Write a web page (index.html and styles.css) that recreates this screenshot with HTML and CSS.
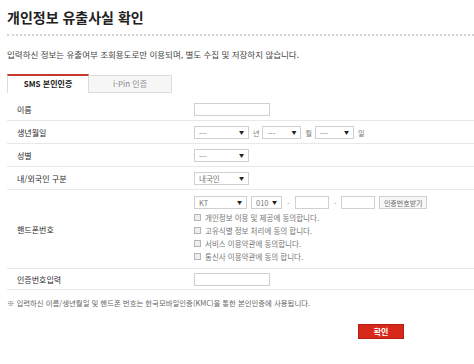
FILE: index.html
```html
<!DOCTYPE html>
<html lang="ko">
<head>
  <meta charset="UTF-8" />
  <meta name="viewport" content="width=device-width, initial-scale=1.0"/>
  <title>개인정보 유출사실 확인</title>
  <link rel="stylesheet" href="styles.css">
</head>
<body>

  <div class="page">
    <h1 class="title">개인정보 유출사실 확인</h1>
    <p class="intro">입력하신 정보는 유출여부 조회용도로만 이용되며, 별도 수집 및 저장하지 않습니다.</p>

    <div class="tabs">
      <div class="tab active">SMS 본인인증</div>
      <div class="tab">i-Pin 인증</div>
    </div>

    <div class="form">
      <div class="row first">
        <div class="label">이름</div>
        <div class="field"><input type="text" class="text name" /></div>
      </div>

      <div class="row">
        <div class="label">생년월일</div>
        <div class="field">
          <span class="select w-year"><select><option>---</option></select></span>
          <span class="unit">년</span>
          <span class="select w-small"><select><option>---</option></select></span>
          <span class="unit">월</span>
          <span class="select w-small"><select><option>---</option></select></span>
          <span class="unit">일</span>
        </div>
      </div>

      <div class="row">
        <div class="label">성별</div>
        <div class="field">
          <span class="select w-year"><select><option>---</option></select></span>
        </div>
      </div>

      <div class="row">
        <div class="label">내/외국인 구분</div>
        <div class="field">
          <span class="select w-year"><select><option>내국인</option></select></span>
        </div>
      </div>

      <div class="row phone">
        <div class="label">핸드폰번호</div>
        <div class="field-stack">
          <div class="field">
            <span class="select w-carrier"><select><option>KT</option></select></span>
            <span class="select w-prefix"><select><option>010</option></select></span>
            <span class="dash">-</span>
            <input type="text" class="text num" />
            <span class="dash">-</span>
            <input type="text" class="text num" />
            <button class="btn-code">인증번호받기</button>
          </div>
          <ul class="agree">
            <li><input type="checkbox" /> 개인정보 이용 및 제공에 동의합니다.</li>
            <li><input type="checkbox" /> 고유식별 정보 처리에 동의 합니다.</li>
            <li><input type="checkbox" /> 서비스 이용약관에 동의합니다.</li>
            <li><input type="checkbox" /> 통신사 이용약관에 동의 합니다.</li>
          </ul>
        </div>
      </div>

      <div class="row last">
        <div class="label">인증번호입력</div>
        <div class="field"><input type="text" class="text name" /></div>
      </div>
    </div>

    <p class="note">※ 입력하신 이름/생년월일 및 핸드폰 번호는 한국모바일인증(KMC)을 통한 본인인증에 사용됩니다.</p>

    <div class="actions">
      <button class="btn-confirm">확인</button>
    </div>
  </div>

</body>
</html>
```

FILE: styles.css
```css
* {
  box-sizing: border-box;
}

body {
  margin: 0;
  background: #fff;
  color: #333;
  font-family: "Noto Sans CJK KR", "Noto Sans", sans-serif;
  overflow: hidden;
}

.page {
  padding: 8px 0 0 7px;
}

.title {
  margin: 0;
  font-size: 14px;
  line-height: 18px;
  font-weight: bold;
  color: #222;
  padding-bottom: 8px;
  border-bottom: 2px dotted #d4d4d4;
}

.intro {
  margin: 12px 0 0;
  font-size: 8.5px;
  line-height: 12px;
  color: #444;
}

.tabs {
  display: flex;
  margin-top: 14px;
  height: 19px;
}

.tab {
  width: 83px;
  height: 18px;
  margin-top: 1px;
  background: #f6f6f6;
  border: 1px solid #dcdcdc;
  border-left: none;
  color: #888;
  font-size: 8px;
  line-height: 16px;
  text-align: center;
}

.tab.active {
  width: 82px;
  height: 19px;
  margin-top: 0;
  background: #fff;
  border: 1px solid #dcdcdc;
  border-top: 2px solid #c8372d;
  border-bottom: none;
  color: #222;
  font-weight: bold;
}

.row {
  display: grid;
  grid-template-columns: 187px 1fr;
  align-items: center;
  padding: 5px 0 4px;
  border-bottom: 1px solid #e8e8e8;
}

.row.first {
  padding-top: 10px;
}

.row.phone {
  padding: 6px 0 5px;
}

.row.last {
  padding: 4px 0 3px;
}

.label {
  padding-left: 10px;
  font-size: 8px;
  color: #2a2a2a;
}

.field {
  display: flex;
  align-items: center;
  height: 13px;
  font-size: 7.5px;
  color: #666;
}

.text {
  height: 13px;
  border: 1px solid #d0d0d0;
  padding: 0;
  background: #fff;
}

.text.name {
  width: 76px;
}

.text.num {
  width: 34px;
}

.select {
  position: relative;
  display: inline-block;
  height: 13px;
}

.select select {
  appearance: none;
  -webkit-appearance: none;
  width: 100%;
  height: 13px;
  margin: 0;
  padding: 0 0 0 4px;
  border: 1px solid #d0d0d0;
  border-radius: 0;
  background: #fff;
  font-family: inherit;
  font-size: 7.5px;
  line-height: 11px;
  color: #777;
}

.select::after {
  content: "▼";
  position: absolute;
  right: 5px;
  top: 3px;
  font-size: 5px;
  line-height: 6px;
  color: #222;
}

.w-year {
  width: 55px;
}

.w-small {
  width: 39px;
}

.w-carrier {
  width: 53px;
  margin-right: 4px;
}

.w-prefix {
  width: 31px;
}

.unit {
  margin: 0 3px 0 4px;
  font-size: 7px;
  color: #777;
}

.dash {
  margin: 0 5px;
  color: #999;
}

.btn-code {
  height: 13px;
  width: 48px;
  margin-left: 4px;
  padding: 0;
  border: 1px solid #cfcfcf;
  background: #f8f8f8;
  font-family: inherit;
  font-size: 7px;
  color: #666;
}

.agree {
  list-style: none;
  margin: 2px 0 0;
  padding: 0;
}

.agree li {
  display: flex;
  align-items: center;
  height: 13px;
  font-size: 7.5px;
  color: #777;
}

.agree input {
  appearance: none;
  -webkit-appearance: none;
  width: 7px;
  height: 7px;
  margin: 0 4px 0 0;
  border: 1px solid #b5b5b5;
  background: #eee;
}

.note {
  margin: 7px 0 0;
  font-size: 7.4px;
  line-height: 12px;
  color: #666;
}

.actions {
  display: flex;
  justify-content: flex-end;
  margin-top: 15px;
  padding-right: 70px;
}

.btn-confirm {
  width: 46px;
  height: 15px;
  padding: 0;
  border: 1px solid #b81d14;
  background: #d7281c;
  color: #fff;
  font-family: inherit;
  font-size: 8px;
  font-weight: bold;
}
```
